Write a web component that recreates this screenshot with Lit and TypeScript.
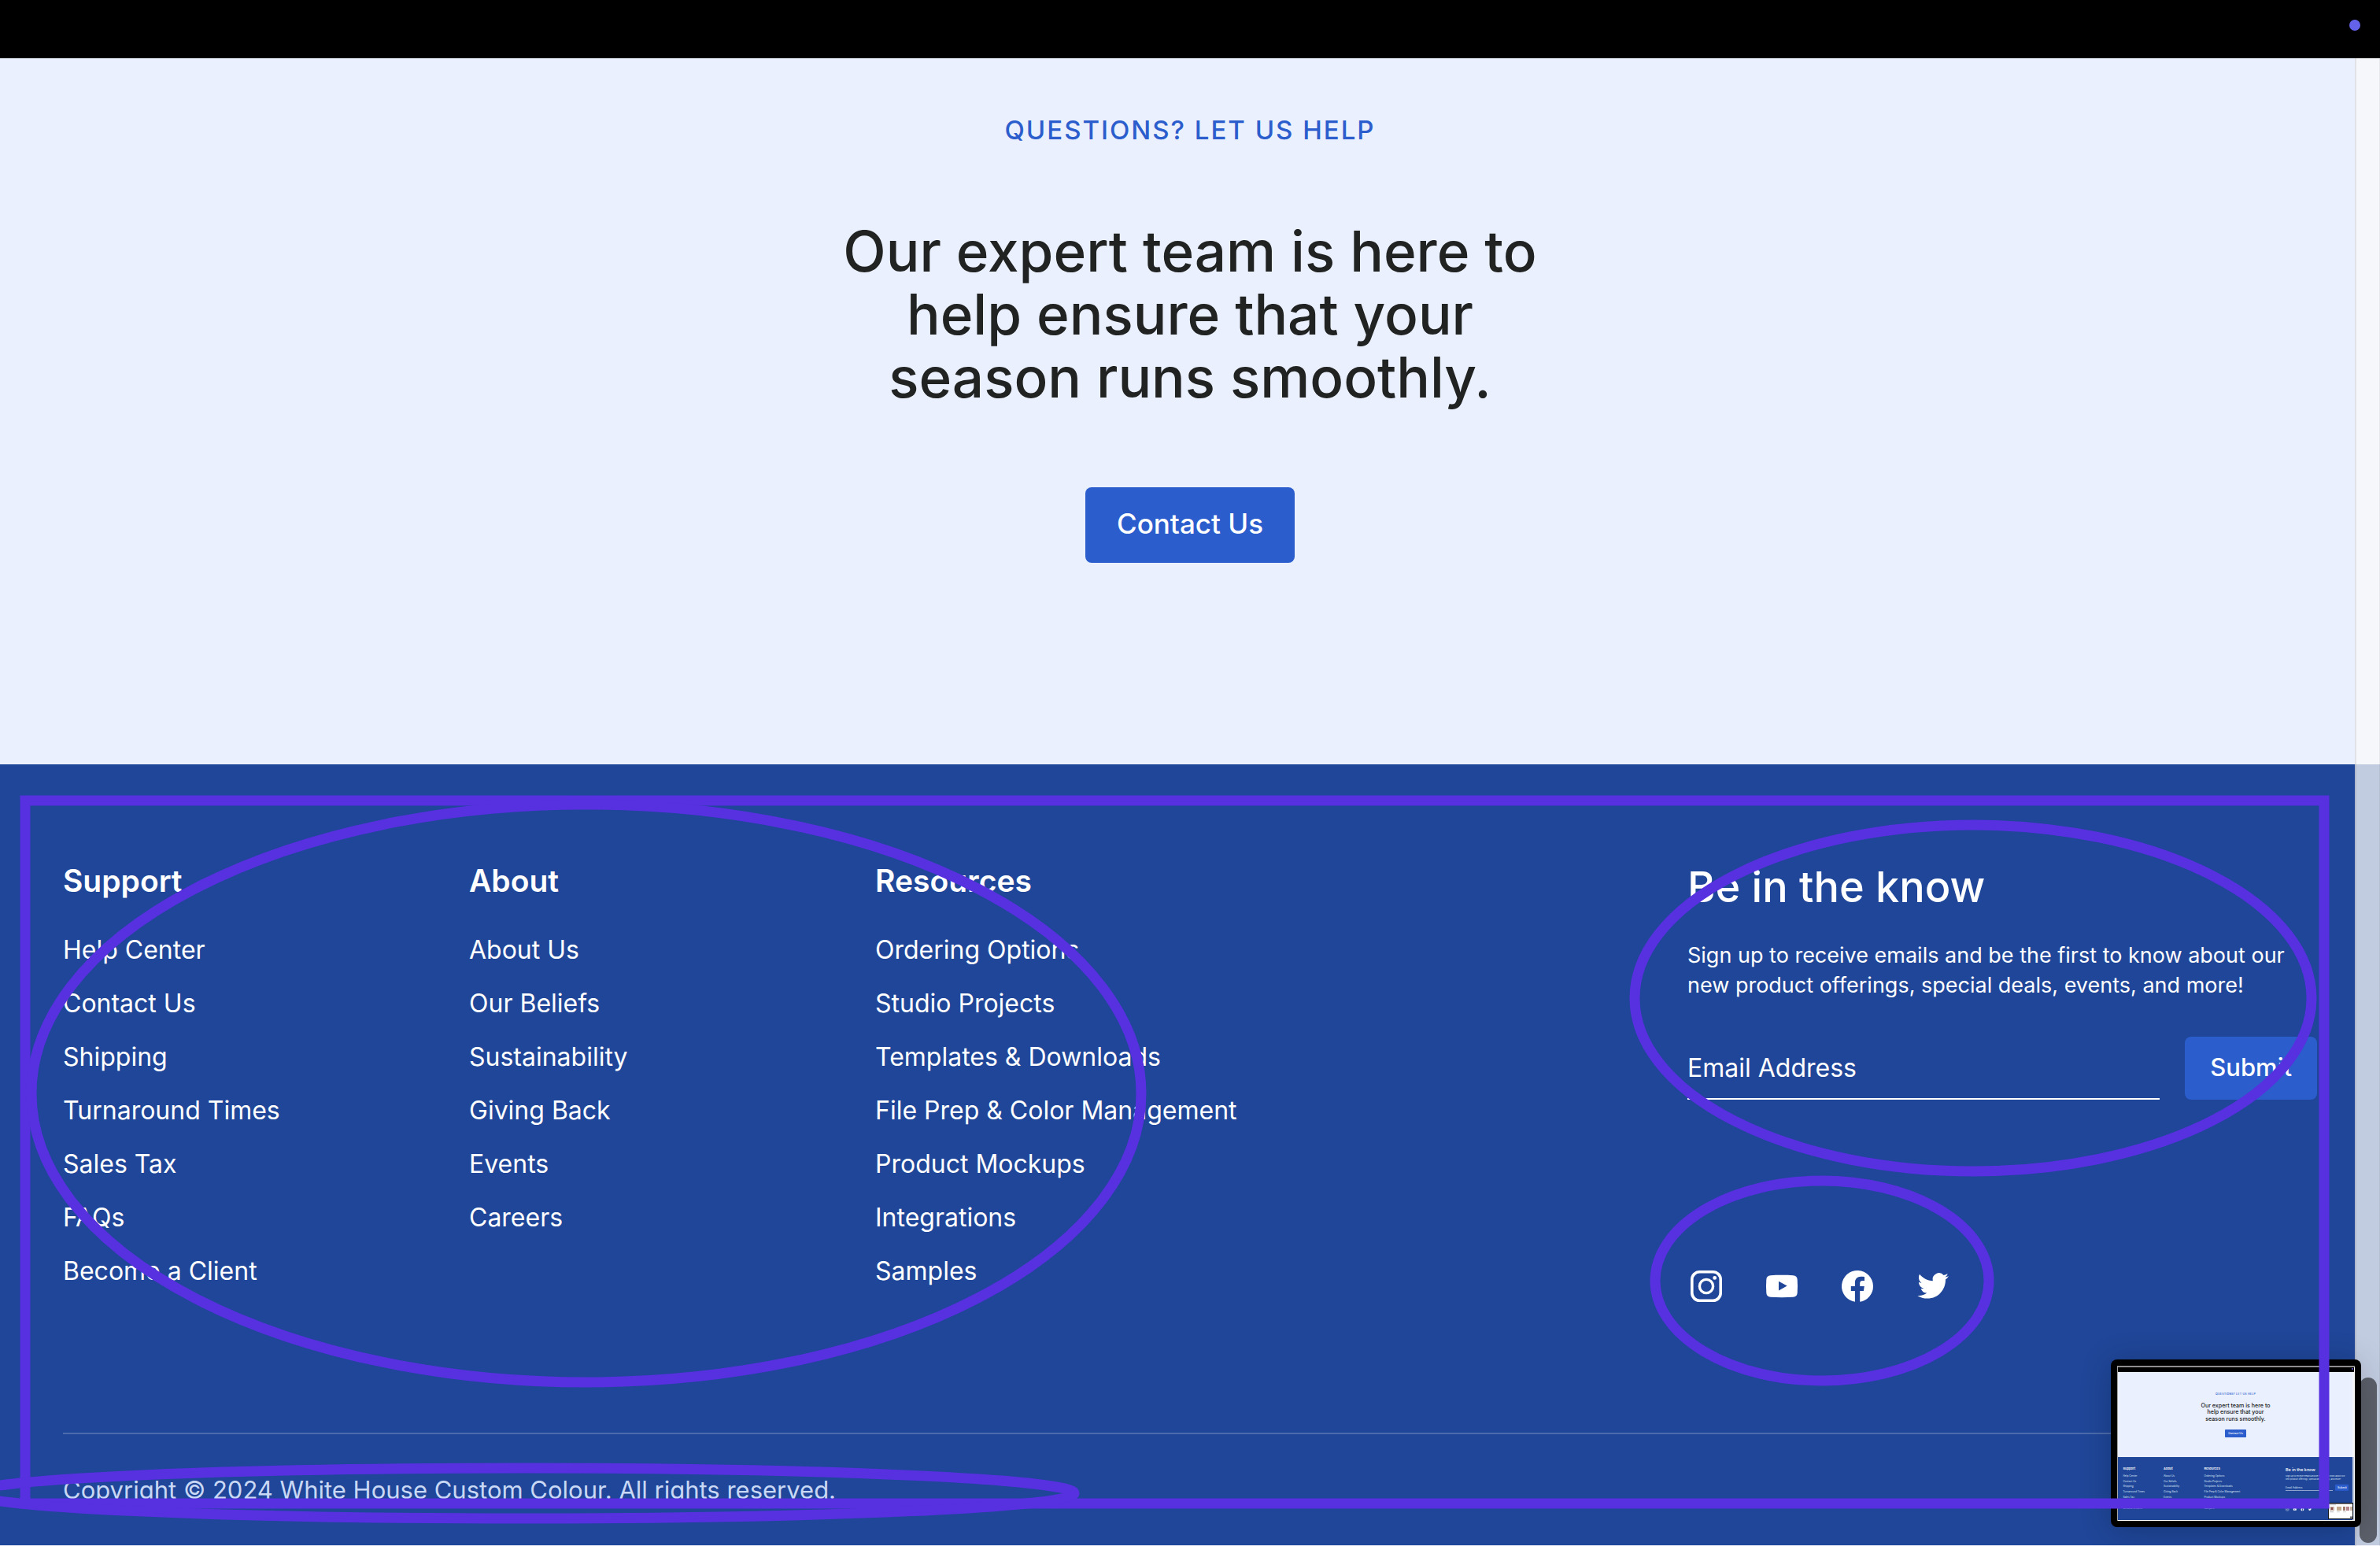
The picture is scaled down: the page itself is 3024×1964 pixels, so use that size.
import { LitElement, html, svg, css } from "lit";
import { customElement } from "lit/decorators.js";

const columns = [
  {
    title: "Support",
    links: ["Help Center", "Contact Us", "Shipping", "Turnaround Times", "Sales Tax", "FAQs", "Become a Client"],
  },
  {
    title: "About",
    links: ["About Us", "Our Beliefs", "Sustainability", "Giving Back", "Events", "Careers"],
  },
  {
    title: "Resources",
    links: [
      "Ordering Options",
      "Studio Projects",
      "Templates & Downloads",
      "File Prep & Color Management",
      "Product Mockups",
      "Integrations",
      "Samples",
    ],
  },
];

const instagram = svg`
  <rect x="5.8" y="5.8" width="36.4" height="36.4" rx="9.6" fill="none" stroke="currentColor" stroke-width="3.6"/>
  <circle cx="24" cy="24" r="8.6" fill="none" stroke="currentColor" stroke-width="3.4"/>
  <circle cx="34.7" cy="13.4" r="2.4"/>`;
const youtube = svg`
  <path fill-rule="evenodd" d="M24 9.8c5 0 10 .1 14.4 .4 3.3.2 5 2 5.3 5.3.4 5.6.4 11.4 0 17-.3 3.3-2 5.1-5.3 5.3-9.6.5-19.2.5-28.8 0-3.3-.2-5-2-5.3-5.3-.4-5.6-.4-11.4 0-17 .3-3.3 2-5.1 5.3-5.3C14 9.9 19 9.8 24 9.8zM20 17.7v11.8l10.7-5.9z"/>`;
const facebook = svg`
  <path d="M44 24a20 20 0 1 0-23.1 19.8V30h-5.1v-6h5.1v-4.4c0-5 3-7.8 7.6-7.8 2.2 0 4.5.4 4.5.4v4.9h-2.5c-2.5 0-3.3 1.6-3.3 3.1V24h5.6l-.9 6h-4.7v13.8A20 20 0 0 0 44 24z"/>`;
const twitter = svg`
  <path transform="translate(4.3 3.6) scale(1.654)" d="M23.953 4.57a10 10 0 01-2.825.775 4.958 4.958 0 002.163-2.723c-.951.555-2.005.959-3.127 1.184a4.92 4.92 0 00-8.384 4.482C7.69 8.095 4.067 6.13 1.64 3.162a4.822 4.822 0 00-.666 2.475c0 1.71.87 3.213 2.188 4.096a4.904 4.904 0 01-2.228-.616v.06a4.923 4.923 0 003.946 4.827 4.996 4.996 0 01-2.212.085 4.936 4.936 0 004.604 3.417 9.867 9.867 0 01-6.102 2.105c-.39 0-.779-.023-1.17-.067a13.995 13.995 0 007.557 2.209c9.053 0 13.998-7.496 13.998-13.985 0-.21 0-.42-.015-.63A9.935 9.935 0 0024 4.59z"/>`;

const socials = [
  { name: "Instagram", icon: instagram },
  { name: "YouTube", icon: youtube },
  { name: "Facebook", icon: facebook },
  { name: "Twitter", icon: twitter },
];

/* Floating miniature of the page; its drawing units are a tenth of a pixel. */
@customElement("page-preview")
export class PagePreview extends LitElement {
  static styles = css`
    :host {
      display: block;
      width: 318px;
      height: 213px;
      border-radius: 8px;
      background: #000;
      box-shadow: 0 4px 40px rgba(0, 0, 0, 0.2);
    }
    svg {
      display: block;
      width: 100%;
      height: 100%;
      font-family: Inter, "Liberation Sans", sans-serif;
    }
    .eyebrow {
      font-size: 36px;
      font-weight: 500;
      letter-spacing: 2px;
      fill: #2b5dcd;
    }
    .heading {
      font-size: 71px;
      font-weight: 500;
      fill: #212322;
    }
    .title {
      font-size: 40px;
      font-weight: 600;
      fill: #fff;
    }
    .button {
      font-size: 35px;
      font-weight: 500;
      fill: #fff;
    }
    .sign {
      font-size: 54px;
      font-weight: 500;
      fill: #fff;
    }
    .link {
      font-size: 32px;
      fill: #dbe4f6;
    }
    .small {
      font-size: 27px;
      fill: #dbe4f6;
    }
  `;

  render() {
    const xs = [155, 670, 1185];
    return html`<svg viewBox="0 0 3180 2130" aria-hidden="true">
      <rect x="80" y="80" width="3020" height="1970" fill="#fff" />
      <rect x="80" y="80" width="3020" height="20" fill="#8d8d8d" />
      <rect x="80" y="80" width="10" height="1970" fill="#a5a5a5" />
      <rect x="90" y="100" width="3000" height="60" fill="#000" />
      <circle cx="3070" cy="120" r="10" fill="#6562ea" />
      <rect x="90" y="160" width="2980" height="1080" fill="#eaf0fd" />
      <rect x="3070" y="160" width="20" height="1080" fill="#f4f6fa" />
      <rect x="90" y="1240" width="2980" height="800" fill="#1f4698" />
      <rect x="3070" y="1240" width="20" height="800" fill="#c2cce1" />
      <g text-anchor="middle">
        <text class="eyebrow" x="1585" y="445">QUESTIONS? LET US HELP</text>
        <text class="heading" x="1585" y="613">Our expert team is here to</text>
        <text class="heading" x="1585" y="694">help ensure that your</text>
        <text class="heading" x="1585" y="775">season runs smoothly.</text>
        <rect x="1450" y="890" width="270" height="100" rx="8" fill="#2b5dcd" />
        <text class="button" x="1585" y="950">Contact Us</text>
      </g>
      ${columns.map(
        (c, i) => svg`
          <text class="title" x=${xs[i]} y="1402">${c.title}</text>
          ${c.links.map((l, n) => svg`<text class="link" x=${xs[i]} y=${1488 + n * 68}>${l}</text>`)}`,
      )}
      <text class="sign" x="2220" y="1415">Be in the know</text>
      <text class="small" x="2220" y="1492">Sign up to receive emails and be the first to know about our</text>
      <text class="small" x="2220" y="1530">new product offerings, special deals, events, and more!</text>
      <text class="link" x="2220" y="1638">Email Address</text>
      <rect x="2220" y="1662" width="600" height="5" fill="#fff" />
      <rect x="2850" y="1588" width="170" height="80" rx="8" fill="#2b5dcd" />
      <text class="button" x="2880" y="1638">Submit</text>
      ${socials.map(
        (s, i) => svg`<g transform="translate(${2218 + i * 96} 1880)" fill="#fff" color="#fff">${s.icon}</g>`,
      )}
      <rect x="2760" y="1820" width="320" height="210" fill="#15181f" />
      <rect x="2770" y="1835" width="300" height="185" fill="#fff" />
      <rect x="2780" y="1842" width="80" height="10" fill="#c9cbd0" />
      <rect x="2780" y="1870" width="60" height="50" fill="#c9b3ab" />
      <rect x="2800" y="1880" width="20" height="30" fill="#8a4b48" />
      <rect x="2870" y="1870" width="60" height="50" fill="#c4ab8f" />
      <rect x="2950" y="1870" width="30" height="50" fill="#9d7a6c" />
      <rect x="2990" y="1870" width="40" height="50" fill="#b8858c" />
      <rect x="3040" y="1870" width="30" height="50" fill="#ccb7a4" />
      <rect x="2780" y="1932" width="50" height="10" fill="#b9bbc0" />
      <rect x="2870" y="1932" width="40" height="10" fill="#d0d2d6" />
      <rect x="2950" y="1932" width="40" height="10" fill="#d0d2d6" />
      <rect x="3040" y="1995" width="30" height="20" fill="#5a5d66" />
    </svg>`;
  }
}

@customElement("app-root")
export class AppRoot extends LitElement {
  static styles = css`
    :host {
      position: relative;
      display: flex;
      flex-direction: column;
      min-height: 100vh;
      overflow: hidden;
      font-family: Inter, "Liberation Sans", sans-serif;
      color: #fff;
    }
    * {
      box-sizing: border-box;
    }
    h2,
    h3,
    p,
    ul {
      margin: 0;
      padding: 0;
    }
    ul {
      list-style: none;
    }
    a {
      color: inherit;
      text-decoration: none;
    }
    button,
    input {
      font: inherit;
      color: inherit;
      border: 0;
      margin: 0;
    }
    .topbar {
      display: flex;
      align-items: center;
      justify-content: flex-end;
      height: 74px;
      padding: 0 25px 10px 0;
      background: #000;
    }
    .dot {
      width: 14px;
      height: 14px;
      border-radius: 50%;
      background: #6562ea;
    }
    .help {
      display: flex;
      flex-direction: column;
      align-items: center;
      padding: 71px 80px 256px;
      background: #eaf0fd;
      text-align: center;
    }
    .eyebrow {
      font-size: 33px;
      font-weight: 500;
      line-height: 40px;
      letter-spacing: 2px;
      color: #2b5dcd;
    }
    .heading {
      max-width: 920px;
      margin-top: 94px;
      font-size: 71px;
      font-weight: 500;
      line-height: 80px;
      color: #212322;
    }
    .button {
      display: flex;
      align-items: center;
      justify-content: center;
      padding: 0 32px 4px;
      border-radius: 8px;
      background: #2b5dcd;
      font-size: 31px;
      font-weight: 500;
    }
    .contact {
      height: 96px;
      margin-top: 100px;
      padding: 0 40px 4px;
      font-size: 35px;
    }
    footer {
      flex: 1;
      padding: 124px 80px 40px;
      border-bottom: 1px solid #dfe5f2;
      background: #1f4698;
    }
    .columns {
      display: grid;
      grid-template-columns: 516fr 516fr 1032fr 800fr;
    }
    .column-title {
      margin-bottom: 30px;
      font-size: 39px;
      font-weight: 600;
      line-height: 48px;
    }
    .column li {
      font-size: 32px;
      line-height: 68px;
    }
    .signup-title {
      font-size: 54px;
      font-weight: 500;
      line-height: 64px;
    }
    .signup-text {
      margin-top: 36px;
      font-size: 27px;
      line-height: 38px;
    }
    .form {
      display: flex;
      gap: 32px;
      height: 80px;
      margin-top: 46px;
    }
    .email {
      flex: 1;
      min-width: 0;
      padding: 0;
      border-bottom: 2px solid #fff;
      background: transparent;
      font-size: 32px;
      outline: none;
    }
    .email::placeholder {
      color: #fff;
      opacity: 1;
    }
    .socials {
      display: flex;
      gap: 48px;
      margin-top: 213px;
    }
    .socials svg {
      display: block;
      width: 48px;
      height: 48px;
      fill: currentColor;
    }
    .legal {
      margin-top: 162px;
      padding-top: 51px;
      border-top: 2px solid rgba(255, 255, 255, 0.2);
      font-size: 31px;
      line-height: 40px;
      color: #c9d8f5;
    }
    .scrollbar {
      position: absolute;
      top: 74px;
      right: 0;
      bottom: 0;
      width: 32px;
      border-left: 2px solid rgba(0, 0, 0, 0.08);
      border-right: 1px solid rgba(0, 0, 0, 0.06);
      background: rgba(250, 250, 250, 0.75);
    }
    .scroll-thumb {
      position: absolute;
      right: 3px;
      bottom: 4px;
      width: 22px;
      height: 210px;
      border-radius: 11px;
      background: #5c606a;
    }
    .preview {
      position: absolute;
      right: 24px;
      bottom: 24px;
    }
    .marks {
      position: absolute;
      inset: 0;
      width: 100%;
      height: 100%;
      fill: none;
      stroke: #5730e0;
      stroke-width: 13px;
      pointer-events: none;
    }
  `;

  render() {
    return html`
      <div class="topbar"><span class="dot"></span></div>
      <section class="help">
        <p class="eyebrow">QUESTIONS? LET US HELP</p>
        <h2 class="heading">Our expert team is here to help ensure that your season runs smoothly.</h2>
        <button class="button contact" type="button">Contact Us</button>
      </section>
      <footer>
        <div class="columns">
          ${columns.map(
            (c) => html`<nav class="column" aria-label=${c.title}>
              <h3 class="column-title">${c.title}</h3>
              <ul>
                ${c.links.map((l) => html`<li><a href="#">${l}</a></li>`)}
              </ul>
            </nav>`,
          )}
          <div>
            <h2 class="signup-title">Be in the know</h2>
            <p class="signup-text">
              Sign up to receive emails and be the first to know about our new product offerings, special deals, events,
              and more!
            </p>
            <form class="form" @submit=${(e: Event) => e.preventDefault()}>
              <input class="email" type="email" aria-label="Email Address" placeholder="Email Address" />
              <button class="button" type="submit">Submit</button>
            </form>
            <div class="socials">
              ${socials.map(
                (s) => html`<a href="#" aria-label=${s.name}><svg viewBox="0 0 48 48" aria-hidden="true">${s.icon}</svg></a>`,
              )}
            </div>
          </div>
        </div>
        <p class="legal">Copyright © 2024 White House Custom Colour. All rights reserved.</p>
      </footer>
      <div class="scrollbar" aria-hidden="true"><div class="scroll-thumb"></div></div>
      <page-preview class="preview"></page-preview>
      <svg class="marks" viewBox="0 0 3024 1964" preserveAspectRatio="none" aria-hidden="true">
        <rect x="32" y="1017" width="2921" height="893" />
        <ellipse cx="745" cy="1389" rx="705" ry="367" />
        <ellipse cx="2507" cy="1268" rx="430" ry="220" />
        <ellipse cx="2315" cy="1627" rx="212" ry="127" />
        <ellipse cx="665" cy="1897" rx="700" ry="32" />
      </svg>
    `;
  }
}
